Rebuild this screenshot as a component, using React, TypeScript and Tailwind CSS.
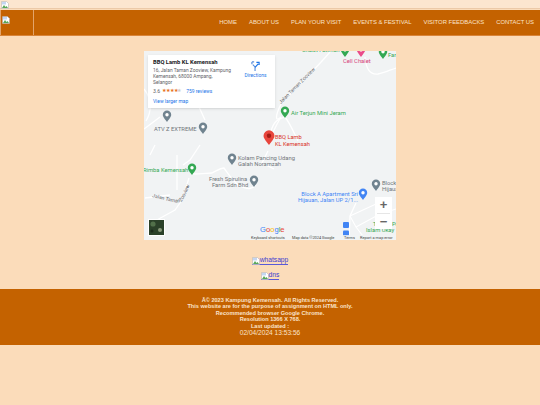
const Broken = () => (
  <svg width="8" height="8" viewBox="0 0 16 16" className="inline-block shrink-0">
    <path d="M1 1h10l4 4v10H1z" fill="#fff" stroke="#a8a8a8" />
    <path d="M2 14l4-6 3 4 2-2 3 4z" fill="#5aa85a" />
    <path d="M2 2h8v5H2z" fill="#c4d6f2" />
  </svg>
);

const links = ["HOME", "ABOUT US", "PLAN YOUR VISIT", "EVENTS & FESTIVAL", "VISITOR FEEDBACKS", "CONTACT US"];

const Pin = ({ x, y, c, s = 1, d = "#fff" }: { x: number; y: number; c: string; s?: number; d?: string }) => (
  <g transform={`translate(${x} ${y}) scale(${s})`}>
    <path d="M0 7C-3 3-4.2 1.6-4.2-.2a4.2 4.2 0 0 1 8.4 0C4.2 1.6 3 3 0 7z" fill={c} />
    <circle cx="0" cy="-.2" r="1.7" fill={d} />
  </g>
);

const MapArt = () => (
  <svg viewBox="0 0 252 189" width="252" height="189" className="block" style={{ fontFamily: "Roboto, sans-serif" }}>
    <rect width="252" height="189" fill="#f1f3f4" />
    <g fill="none" stroke="#fff" strokeWidth="1.3">
      <path d="M186 1C170 20 150 38 137 53C131 65 131 72 137 66C130 78 128 82 126 90" />
      <path d="M141 66C134 68 130 70 127 80M141 66C146 72 150 82 154 90" />
      <path d="M221 6C222 18 226 24 234 23C240 22 246 19 252 17" />
      <path d="M45 127L38 149L31 159L11 170" />
      <path d="M49 123C58 123 64 122 68 122C74 119 77 117 80 117C85 124 90 132 96 135C104 139 108 138 112 134" />
      <path d="M33 104V139M1 147L26 144M56 94L46 109L39 114" />
      <path d="M11 94L6 104" />
      <path d="M61 69L50 45M130 118L118 112L124 100" />
      <path d="M205 189L206 165L212 152" />
      <path d="M206 165L232 153L236 163L212 176L206 165M236 163L252 158M212 176L222 189" strokeWidth="1.1" />
      <path d="M0 38C8 48 8 60 2 70M16 66L0 78" />
    </g>
    <defs>
      <path id="jtz" d="M8 146C22 149 32 153 37 151C41 147 44 138 47 130" />
    </defs>
    <g fill="#5f6368" fontSize="5">
      <text transform="translate(137 53) rotate(-45)">Jalan Taman Zooview</text>
      <text><textPath href="#jtz">Jalan Taman Zooview</textPath></text>
    </g>
    <g fill="#70757a" fontSize="5.8">
      <text x="10" y="80">ATV Z EXTREME</text>
      <text x="94" y="109">Kolam Pancing Udang</text>
      <text x="94" y="115">Galah Noramzah</text>
      <text x="65" y="130">Fresh Spirulina</text>
      <text x="68" y="136">Farm Sdn Bhd</text>
      <text x="238" y="134">Block</text>
      <text x="238" y="140">Hijauan</text>
    </g>
    <g fill="#34a853" fontSize="5.8">
      <text x="147" y="64">Air Terjun Mini Jeram</text>
      <text x="-1" y="121">Rimba Kemensah</text>
      <text x="244" y="6">Far</text>
      <text x="229" y="175">T</text>
      <text x="248" y="175">Pe</text>
      <text x="222" y="181">Islam Ukay</text>
    </g>
    <text x="158" y="1" fill="#34a853" fontSize="5.6">Chalet Fatimah</text>
    <text x="199" y="12" fill="#d6447a" fontSize="5.8">Cell Chalet</text>
    <g fill="#d93025" fontSize="5.7">
      <text x="131" y="88">BBQ Lamb</text>
      <text x="131" y="94.5">KL Kemensah</text>
    </g>
    <g fill="#4285f4" fontSize="5.8" textAnchor="end">
      <text x="214" y="144.5">Block A Apartment Sri</text>
      <text x="214" y="150.5">Hijauan, Jalan UP 2/1...</text>
    </g>
    <Pin x={201} y={-1} c="#34a853" />
    <Pin x={217} y={-1} c="#ea4c89" />
    <Pin x={239} y={1} c="#34a853" />
    <Pin x={141} y={60} c="#34a853" />
    <Pin x={23} y={64} c="#70838f" />
    <Pin x={59} y={76} c="#70838f" />
    <Pin x={125} y={85} c="#e8453c" s={1.3} d="#a31c15" />
    <Pin x={88} y={107} c="#70838f" />
    <Pin x={48} y={117} c="#34a853" />
    <Pin x={110} y={129} c="#70838f" />
    <Pin x={232} y={133} c="#70838f" />
    <Pin x={219} y={142} c="#4285f4" />
    <rect x="199" y="171" width="6" height="6" rx="1" fill="#4285f4" />
    <rect x="199" y="179.5" width="6" height="6" rx="1" fill="#4285f4" />
    <rect x="4" y="168" width="17" height="17" fill="#fff" />
    <rect x="5" y="169" width="15" height="15" fill="#2b4129" />
    <circle cx="9" cy="173" r="2.6" fill="#52704a" />
    <circle cx="16" cy="179" r="2" fill="#8b9a7b" />
    <circle cx="8" cy="180" r="1.5" fill="#1b2a1b" />
    <text x="116" y="181" fontSize="7.6" fontFamily="Liberation Sans, sans-serif">
      <tspan fill="#4285f4">G</tspan>
      <tspan fill="#ea4335">o</tspan>
      <tspan fill="#fbbc05">o</tspan>
      <tspan fill="#4285f4">g</tspan>
      <tspan fill="#34a853">l</tspan>
      <tspan fill="#ea4335">e</tspan>
    </text>
    <rect x="106" y="184" width="146" height="5" fill="#f1f3f4" opacity="0.85" />
    <g fill="#444" fontSize="3.9">
      <text x="107" y="188.3">Keyboard shortcuts</text>
      <text x="148" y="188.3">Map data ©2024 Google</text>
      <text x="200" y="188.3">Terms</text>
      <text x="216" y="188.3">Report a map error</text>
    </g>
  </svg>
);

export default function App() {
  return (
    <div className="min-h-[405px] bg-[#fbdcba] text-black" style={{ fontFamily: '"Liberation Sans", Arial, sans-serif' }}>
      <div className="h-[9px] mb-px pl-px pt-px bg-[#fce6cf] border-b border-[#eccaa8] flex items-start">
        <Broken />
      </div>
      <nav className="h-[26px] bg-[#c46200] flex justify-between border-b border-[#d9853a]">
        <div className="w-[34px] border-r border-l border-[#e3a46a] pl-px pt-px leading-none"><Broken /></div>
        <ul className="flex items-center gap-[12px] pr-[6px] text-[5.9px] text-[#fbe3ca]">
          {links.map((l) => (
            <li key={l}>{l}</li>
          ))}
        </ul>
      </nav>
      <main className="flex flex-col items-center pt-[15px]">
        <div className="relative w-[252px] h-[189px] overflow-hidden">
          <MapArt />
          <div className="absolute left-[4px] top-[4px] w-[127px] h-[53px] bg-white shadow-sm pl-[5px] pt-[3px] flex" style={{ fontFamily: "Roboto, sans-serif" }}>
            <div className="w-[88px]">
              <div className="text-[5.8px] font-bold text-[#202124] leading-[8px] whitespace-nowrap">BBQ Lamb KL Kemensah</div>
              <div className="text-[4.9px] text-[#5f6368] leading-[6px] mt-[1px]">
                <div className="whitespace-nowrap">16, Jalan Taman Zooview, Kampung</div>
                <div className="whitespace-nowrap">Kemensah, 68000 Ampang,</div>
                <div>Selangor</div>
              </div>
              <div className="flex items-center text-[5.2px] text-[#5f6368] mt-[2px] leading-[8px]">
                <span>3.6</span>
                <span className="text-[#e7711b] text-[4.6px] tracking-[-0.2px] ml-[2px]">★★★★<span className="text-[#ccc]">★</span></span>
                <span className="text-[#1a73e8] ml-[5px] whitespace-nowrap text-[4.9px]">759 reviews</span>
              </div>
              <div className="text-[4.9px] text-[#1a73e8] mt-[3px] leading-[6px] whitespace-nowrap">View larger map</div>
            </div>
            <div className="flex flex-col items-center ml-[3px] w-[23px] pt-[3px]">
              <svg width="9" height="10" viewBox="0 0 10 11">
                <path d="M4.5 11V6.5L2 4M1 1h2.5M1 1v2.5" fill="none" stroke="#5a8fdc" strokeWidth="1.3" />
                <path d="M4.5 7L8 3.2M6 1.5h3v3" fill="none" stroke="#1a73e8" strokeWidth="1.3" />
              </svg>
              <span className="text-[4.9px] text-[#1a73e8] leading-[6px] mt-[1px]">Directions</span>
            </div>
          </div>
          <div className="absolute right-[4px] top-[146px] w-[17px] h-[32px] bg-white flex flex-col items-center justify-center">
            <span className="text-[13px] leading-[15.5px] font-bold text-[#666]">+</span>
            <span className="w-[13px] h-px bg-[#e6e6e6]" />
            <span className="text-[13px] leading-[15.5px] font-bold text-[#666]">−</span>
          </div>
        </div>
        <a className="mt-[17px] h-[8px] flex items-center text-[6.7px] text-[#3b3bd0] border-b border-[#5a5ad8]"><Broken />whatsapp</a>
        <a className="mt-[7px] h-[8px] flex items-center text-[6.7px] text-[#3b3bd0] border-b border-[#5a5ad8]"><Broken />dns</a>
      </main>
      <footer className="mt-[9px] h-[56px] bg-[#c46200] flex flex-col items-center pt-[8px] text-[5.6px] font-bold text-[#fbe3ca] leading-[6.4px]">
        <div>Â© 2023 Kampung Kemensah. All Rights Reserved.</div>
        <div>This website are for the purpose of assignment on HTML only.</div>
        <div>Recommended browser Google Chrome.</div>
        <div>Resolution 1366 X 768.</div>
        <div>Last updated :</div>
        <div className="text-[6.6px] font-normal leading-[7px]">02/04/2024 13:53:56</div>
      </footer>
    </div>
  );
}
